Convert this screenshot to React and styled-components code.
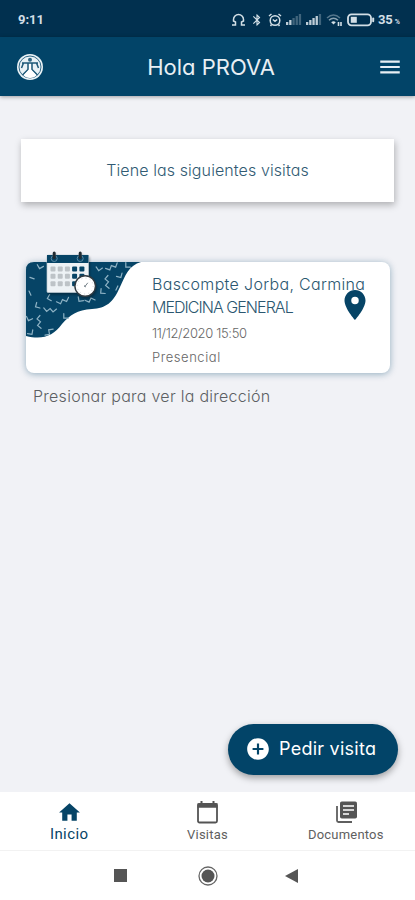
import React from "react";
import styled, { createGlobalStyle } from "styled-components";
import {
  MdAddCircle,
  MdBluetooth,
  MdHome,
  MdLocationOn,
  MdMenu,
} from "react-icons/md";

const tabs = [
  { label: "Inicio", icon: <MdHome size={25} />, active: true },
  { label: "Visitas", icon: <CalendarIcon /> },
  { label: "Documentos", icon: <DocumentsIcon /> },
];

export default function App() {
  return (
    <Screen>
      <GlobalStyle />
      <StatusBar />
      <Header>
        <Logo />
        <Title>Hola PROVA</Title>
        <MdMenu size={26} />
      </Header>
      <Content>
        <Notice>Tiene las siguientes visitas</Notice>
        <VisitCard>
          <Pattern />
          <VisitArt />
          <VisitInfo>
            <Doctor>Bascompte Jorba, Carmina</Doctor>
            <Specialty>MEDICINA GENERAL</Specialty>
            <DateText>11/12/2020 15:50</DateText>
            <Kind>Presencial</Kind>
          </VisitInfo>
          <Pin />
        </VisitCard>
        <Hint>Presionar para ver la dirección</Hint>
        <RequestButton>
          <MdAddCircle size={26} />
          <RequestLabel>Pedir visita</RequestLabel>
        </RequestButton>
      </Content>
      <TabBar>
        {tabs.map((tab) => (
          <Tab key={tab.label} $active={tab.active}>
            {tab.icon}
            <TabLabel $active={tab.active}>{tab.label}</TabLabel>
          </Tab>
        ))}
      </TabBar>
      <SystemNav>
        <svg width="13" height="13"><rect width="13" height="13" fill="#555" /></svg>
        <HomeKey width="20" height="20">
          <circle cx="10" cy="10" r="9" fill="none" stroke="#666" strokeWidth="1.3" />
          <circle cx="10" cy="10" r="6.5" fill="#555" />
        </HomeKey>
        <svg width="13" height="14"><path d="M13 0V14L0 7Z" fill="#555" /></svg>
      </SystemNav>
    </Screen>
  );
}

function StatusBar() {
  return (
    <Status>
      <Clock>9:11</Clock>
      <StatusIcons>
        <svg width="15" height="14" fill="none" stroke="currentColor" strokeWidth="1.5">
          <path d="M1 12H4.5V9L2.5 8V6.5A5 5 0 0 1 12.5 6.5V8L10.5 9V12H14" />
        </svg>
        <MdBluetooth size={14} />
        <svg width="14" height="14" fill="none" stroke="currentColor" strokeWidth="1.5">
          <circle cx="7" cy="7.5" r="4.8" />
          <path d="M1 3L3.5 1M13 3L10.5 1M4.8 6.5L7 8.3L9.2 6.5M3.5 11.5L2.5 13M10.5 11.5L11.5 13" />
        </svg>
        <Signal level={2} />
        <Signal level={4} />
        <svg width="17" height="14" fill="none" stroke="currentColor" strokeWidth="1.5">
          <path d="M1 5Q7.5 -1 14 5" opacity="0.4" />
          <path d="M3 7.3Q7.5 3.2 12 7.3" opacity="0.65" />
          <path d="M5.2 9.3Q7.5 7.4 9.8 9.3L7.5 11.5Z" fill="currentColor" stroke="none" />
          <path d="M12.5 9V13M15 9V13" strokeWidth="1.6" />
        </svg>
        <svg width="28" height="14">
          <rect x="1" y="1.3" width="23" height="11" rx="3.5" fill="none" stroke="currentColor" strokeWidth="1.8" />
          <rect x="3.8" y="3.8" width="6" height="6" fill="currentColor" />
          <rect x="25.2" y="4.5" width="2" height="4.8" rx="1" fill="currentColor" />
        </svg>
        <Battery>35<small>%</small></Battery>
      </StatusIcons>
    </Status>
  );
}

function Signal({ level }) {
  return (
    <svg width="16" height="13" fill="currentColor">
      {[3, 5, 7, 9, 11].map((height, i) => (
        <rect
          key={height}
          x={i * 3.2}
          y={12 - height}
          width="2.3"
          height={height}
          opacity={i < level ? 0.9 : 0.3}
        />
      ))}
    </svg>
  );
}

function Logo() {
  return (
    <svg width="26" height="26" viewBox="0 0 26 26">
      <circle cx="13" cy="13" r="13" fill="#e9f2f6" />
      <circle cx="13" cy="13" r="11" fill="none" stroke="#024468" strokeWidth="0.8" />
      <circle cx="13" cy="5.8" r="2" fill="#2d6582" />
      <path
        d="M5 9H21M11 9V15.5L5.5 21M15 9V15.5L20.5 21M6.5 9L4.5 14M19.5 9L21.5 14"
        fill="none"
        stroke="#1d5878"
        strokeWidth="1.5"
      />
      <path d="M12 10H14V15.5L19.5 21.5Q13 26.5 6.5 21.5L12 15.5Z" fill="#fff" />
    </svg>
  );
}

// Zigzag strokes scattered on the blue wave: x, y, rotation, segments
const zigzags = [
  [6, 16, -25, 1], [4, 31, 20, 1], [11, 44, 60, 2], [13, 60, 85, 4],
  [3, 57, 20, 2], [5, 71, -35, 2], [23, 36, 75, 2], [24, 48, 5, 4],
  [37, 39, -20, 4], [54, 38, 35, 2], [23, 70, -55, 3], [39, 55, 45, 2],
  [73, 7, 10, 2], [86, 5, -25, 4], [81, 20, 85, 4], [101, 4, 45, 2],
  [94, 14, -30, 2], [76, 30, 50, 2], [64, 38, -20, 3], [14, 5, 15, 2],
  [91, 26, 70, 1],
];

function zigzagPath(count) {
  let d = `M${-count * 1.6} -1.5`;
  for (let i = 0; i < count; i++) {
    d += i % 2 ? "l3.2 -3.2" : "l3.2 3.2";
  }
  return d;
}

function Pattern() {
  return (
    <PatternSvg width="115" height="77" viewBox="0 0 115 77">
      <path
        d="M0 8Q0 0 8 0H115C103 3 99 14 94 25C87 41 80 46 66 47C51 48 44 53 36 62C27 74 17 78 0 74Z"
        fill="#064466"
      />
      <g fill="none" stroke="#8fb3c5" strokeWidth="1.2" strokeLinecap="round">
        {zigzags.map(([x, y, angle, count], i) => (
          <path
            key={i}
            d={zigzagPath(count)}
            transform={`translate(${x} ${y}) rotate(${angle})`}
          />
        ))}
      </g>
    </PatternSvg>
  );
}

function VisitArt() {
  return (
    <ArtSvg width="54" height="50" viewBox="0 0 54 50">
      <rect x="1" y="4" width="41.5" height="37.5" rx="1" fill="#edf2f5" stroke="#becbd3" strokeWidth="0.7" />
      <path d="M1 4H42.5V12H1Z" fill="#064466" />
      {[15.5, 22.8, 30.2].map((y, row) =>
        [4.5, 11.7, 18.9, 26.1, 33.4].map((x, col) => (
          <rect
            key={`${row}-${col}`}
            x={x}
            y={y}
            width="5"
            height="5"
            rx="1"
            fill={col > 2 ? "#064466" : "#bdc3c7"}
          />
        ))
      )}
      <g fill="none">
        <circle cx="8.2" cy="7.5" r="3" stroke="#5c8aa4" />
        <circle cx="34.2" cy="7.5" r="3" stroke="#5c8aa4" />
        <path d="M8.2 2V6.5M34.2 2V6.5" stroke="#202a31" strokeWidth="3" strokeLinecap="round" />
      </g>
      <circle cx="39.2" cy="35" r="10.3" fill="#fff" stroke="#303a41" strokeWidth="1.4" />
      <circle cx="39.2" cy="35" r="8" fill="none" stroke="#cad1d5" strokeDasharray="1 3.2" />
      <path d="M38.5 36L41.8 31.8M38 34.5L39.8 36" stroke="#65727a" strokeWidth="0.9" />
    </ArtSvg>
  );
}

function Pin() {
  return (
    <PinWrap>
      <MdLocationOn size={36} />
    </PinWrap>
  );
}

function CalendarIcon() {
  return (
    <svg width="24" height="24" fill="none" stroke="#545454">
      <rect x="3" y="4" width="19" height="18.5" rx="1.5" strokeWidth="1.8" />
      <path d="M2.5 5.5H22.5" strokeWidth="4.5" />
      <path d="M6.5 1V4M18.5 1V4" strokeWidth="2" />
    </svg>
  );
}

function DocumentsIcon() {
  return (
    <svg width="24" height="24" fill="none">
      <path d="M3 6V20.5Q3 22 4.5 22H18" stroke="#5f5f5f" strokeWidth="1.8" />
      <rect x="6" y="1.5" width="17" height="17" rx="1.8" fill="#545454" />
      <path d="M9 6H20M9 10H20M9 14H15" stroke="#fff" strokeWidth="1.4" />
    </svg>
  );
}

const GlobalStyle = createGlobalStyle`
  * {
    box-sizing: border-box;
  }

  body {
    margin: 0;
    font-family: Inter, "Open Sans", sans-serif;
    /* single-storey a */
    font-feature-settings: "cv11" 1;
  }

  svg {
    flex-shrink: 0;
  }
`;

const Screen = styled.div`
  width: 415px;
  height: 900px;
  display: flex;
  flex-direction: column;
  background-color: #f1f2f6;
  overflow: hidden;
`;

const Status = styled.div`
  height: 37px;
  flex-shrink: 0;
  padding: 2px 15px 0 18px;
  display: flex;
  align-items: center;
  justify-content: space-between;
  background-color: #01304f;
  color: #d3dfe6;
`;

const Clock = styled.span`
  font-family: Roboto, sans-serif;
  font-size: 13px;
  font-weight: 700;
`;

const StatusIcons = styled.div`
  display: flex;
  align-items: center;
  gap: 4px;
`;

const Battery = styled.span`
  margin-left: -1px;
  font-family: Roboto, sans-serif;
  font-size: 13px;
  font-weight: 700;

  small {
    margin-left: 2px;
    font-size: 7px;
  }
`;

const Header = styled.header`
  height: 59px;
  flex-shrink: 0;
  padding: 0 12px 0 17px;
  display: flex;
  align-items: center;
  justify-content: space-between;
  background-color: #024468;
  color: #e8eff4;
  box-shadow: 0 1px 4px rgba(0, 0, 0, 0.35);
`;

const Title = styled.h1`
  margin: 0;
  padding: 0 0 0 2px;
  font-size: 22px;
  font-weight: 400;
`;

const Content = styled.main`
  flex: 1;
  padding: 43px 21px 0;
  display: flex;
  flex-direction: column;
`;

const Notice = styled.div`
  height: 63px;
  padding-bottom: 1px;
  display: flex;
  align-items: center;
  justify-content: center;
  background-color: #fff;
  color: #315b73;
  font-size: 16px;
  font-weight: 300;
  letter-spacing: 0.1px;
  box-shadow: 1px 3px 7px rgba(0, 0, 0, 0.28);
`;

const VisitCard = styled.div`
  position: relative;
  height: 111px;
  margin: 60px 4px 0 5px;
  padding: 11px 0 0 126px;
  border-radius: 8px;
  background-color: #fff;
  box-shadow: 0 1px 7px rgba(2, 68, 104, 0.4);
`;

const PatternSvg = styled.svg`
  position: absolute;
  top: 0;
  left: 0;
`;

const ArtSvg = styled.svg`
  position: absolute;
  top: -11px;
  left: 20px;
  filter: drop-shadow(1px 2px 1px rgba(0, 0, 0, 0.3));
`;

const PinWrap = styled.div`
  position: absolute;
  top: 25px;
  right: 17px;
  color: #064466;
`;

const VisitInfo = styled.div`
  display: flex;
  flex-direction: column;
  white-space: nowrap;
  font-weight: 300;
  color: #666;
`;

const Doctor = styled.span`
  line-height: 23px;
  font-size: 16px;
  letter-spacing: 0.33px;
  color: #2b5770;
`;

const Specialty = styled(Doctor)`
  letter-spacing: -0.95px;
`;

const DateText = styled.span`
  line-height: 28px;
  font-size: 13px;
  letter-spacing: -0.35px;
`;

const Kind = styled.span`
  line-height: 20px;
  font-size: 13px;
  letter-spacing: 0.55px;
`;

const Hint = styled.p`
  margin: 12px 0 0 12px;
  line-height: 22px;
  font-size: 16px;
  font-weight: 300;
  letter-spacing: 0.27px;
  color: #5c5f63;
`;

const RequestButton = styled.button`
  width: 170px;
  height: 51px;
  margin: auto -4px 17px auto;
  padding: 0 0 2px 17px;
  display: flex;
  align-items: center;
  gap: 8px;
  border: none;
  border-radius: 26px;
  background-color: #024468;
  color: #fff;
  font-family: inherit;
  font-feature-settings: inherit;
  box-shadow: 0 3px 7px rgba(0, 0, 0, 0.35);
`;

const RequestLabel = styled.span`
  font-size: 18px;
  font-weight: 400;
  letter-spacing: 0.25px;
`;

const TabBar = styled.nav`
  height: 58px;
  flex-shrink: 0;
  display: flex;
  background-color: #fff;
`;

const Tab = styled.div`
  flex: 1;
  padding-top: 8px;
  display: flex;
  flex-direction: column;
  align-items: center;
  color: ${({ $active }) => ($active ? "#064466" : "#606060")};
`;

const TabLabel = styled.span`
  margin-top: ${({ $active }) => ($active ? "0" : "2px")};
  line-height: 18px;
  font-family: Roboto, sans-serif;
  font-size: ${({ $active }) => ($active ? "15px" : "13px")};
  letter-spacing: ${({ $active }) => ($active ? "0.4px" : "0.2px")};
`;

const SystemNav = styled.div`
  height: 50px;
  flex-shrink: 0;
  padding: 0 117px 0 114px;
  display: flex;
  align-items: center;
  justify-content: space-between;
  border-top: 1px solid #f2f2f2;
  background-color: #fff;
`;

const HomeKey = styled.svg`
  margin-left: 3px;
`;
